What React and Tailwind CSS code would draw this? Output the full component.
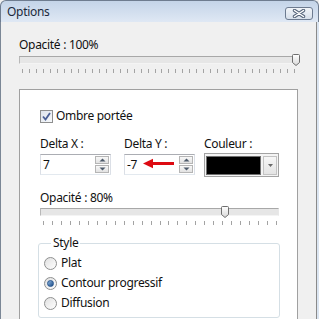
import React from "react";

function Thumb() {
  return (
    <svg width="8" height="12" viewBox="0 0 8 12" className="block">
      <defs>
        <linearGradient id="tg" x1="0" y1="0" x2="0" y2="1">
          <stop offset="0" stopColor="#ffffff" />
          <stop offset="1" stopColor="#d8d8d8" />
        </linearGradient>
      </defs>
      <path d="M1.5 0.5 H6.5 A1 1 0 0 1 7.5 1.5 V8.5 L4 11.5 L0.5 8.5 V1.5 A1 1 0 0 1 1.5 0.5 Z" fill="url(#tg)" stroke="#6f6f6f" strokeWidth="1" />
    </svg>
  );
}

function Slider({ width, ticks, thumb }) {
  const start = 3;
  const end = width - 3;
  const xs = [];
  for (let i = 0; i <= ticks; i++) xs.push(Math.round(start + ((end - start) * i) / ticks) + 0.5);
  return (
    <div className="relative h-[20px]" style={{ width }}>
      <div className="absolute left-0 right-0 top-[2px] h-[8px] border border-t-[#a8a8a8] border-l-[#b8b8b8] border-r-[#e8e8e8] border-b-[#f4f4f4] bg-[#e6e6e6]" />
      <div className="absolute top-0" style={{ left: thumb }}>
        <Thumb />
      </div>
      <svg className="absolute left-0 top-[15px]" width={width} height="5">
        {xs.map((x, i) => (
          <line key={i} x1={x} x2={x} y1="0" y2="4" stroke="#a3a3a3" strokeWidth="1" />
        ))}
      </svg>
    </div>
  );
}

function Spin() {
  return (
    <div className="flex flex-col gap-[1px] py-[1px]">
      <div className="w-[14px] h-[8px] border border-[#b5b5b5] bg-gradient-to-b from-[#f8f8f8] to-[#e2e2e2] flex items-center justify-center">
        <svg width="7" height="4"><path d="M0.5 3.5 L3.5 0.5 L6.5 3.5 Z" fill="#4d5a6b" /></svg>
      </div>
      <div className="w-[14px] h-[8px] border border-[#b5b5b5] bg-gradient-to-b from-[#f8f8f8] to-[#e2e2e2] flex items-center justify-center">
        <svg width="7" height="4"><path d="M0.5 0.5 L3.5 3.5 L6.5 0.5 Z" fill="#4d5a6b" /></svg>
      </div>
    </div>
  );
}

function NumInput({ value, children }) {
  return (
    <div className="relative w-[71px] h-[21px] border border-t-[#abadb3] border-l-[#dbdfe6] border-r-[#dbdfe6] border-b-[#e3e9ef] bg-white flex items-center justify-between pl-[2px] pr-[1px]">
      <span className="leading-[16px]">{value}</span>
      <Spin />
      {children}
    </div>
  );
}

function Radio({ checked, label }) {
  return (
    <div className="h-[20px] flex items-center">
      <div className="w-[13px] h-[13px] rounded-full border border-[#8e8f8f] bg-gradient-to-br from-[#e0e0e0] to-[#ffffff] flex items-center justify-center">
        {checked && <div className="w-[7px] h-[7px] rounded-full bg-gradient-to-br from-[#8fb7e0] to-[#1b4c86] border border-[#26558e]" />}
      </div>
      <span className="ml-[4px] leading-[16px]">{label}</span>
    </div>
  );
}

export default function App() {
  return (
    <div className="w-[319px] h-[319px] overflow-hidden flex flex-col bg-[#f0f0f0] text-[12px] tracking-[-0.3px] text-[#111] font-['Noto_Sans',sans-serif]">
      <div className="h-[22px] shrink-0 flex items-center justify-between rounded-t-[6px] border-t border-l border-r border-[#6e7c8f] bg-gradient-to-b from-[#c4d4e8] to-[#dfe8f4] pl-[6px] pr-[5px]">
        <span className="text-[#1c2a3c] leading-[16px]">Options</span>
        <div className="w-[28px] h-[13px] mt-[3px] rounded-[3px] border border-[#6d7b90] bg-gradient-to-b from-[#f2f5f9] to-[#d6dfea] flex items-center justify-center">
          <svg width="14" height="9" viewBox="0 0 14 9">
            <path d="M2.5 1.5 L11.5 7.5 M11.5 1.5 L2.5 7.5" stroke="#55647a" strokeWidth="3.4" strokeLinecap="round" />
            <path d="M2.5 1.5 L11.5 7.5 M11.5 1.5 L2.5 7.5" stroke="#ffffff" strokeWidth="1.5" strokeLinecap="round" />
          </svg>
        </div>
      </div>
      <div className="flex-1 flex min-h-0">
        <div className="w-[1px] bg-[#7b8796]" />
        <div className="flex-1 flex flex-col pl-[18px] pt-[15px] min-h-0">
          <div className="leading-[16px]">Opacité : 100%</div>
          <div className="mt-[1px]">
            <Slider width={278} ticks={39} thumb={273} />
          </div>
          <div className="mt-[15px] w-[279px] flex-1 bg-white border border-[#a0a0a0] border-b-0 pl-[20px] pt-[18px]">
            <div className="h-[16px] flex items-center">
              <div className="w-[13px] h-[13px] border border-[#8e8f8f] bg-gradient-to-br from-[#dde3ec] to-[#f7f9fb] flex items-center justify-center">
                <svg width="9" height="9" viewBox="0 0 9 9">
                  <path d="M1 4.5 L3.5 7.5 L8 1" fill="none" stroke="#4a5f96" strokeWidth="1.8" />
                </svg>
              </div>
              <span className="ml-[3px] leading-[16px]">Ombre portée</span>
            </div>
            <div className="mt-[12px] flex">
              <div className="w-[84px]">
                <div className="leading-[16px] h-[16px]">Delta X :</div>
                <div className="mt-[2px]">
                  <NumInput value="7" />
                </div>
              </div>
              <div className="w-[80px]">
                <div className="leading-[16px] h-[16px]">Delta Y :</div>
                <div className="mt-[2px]">
                  <NumInput value="-7">
                    <svg className="absolute left-[18px] top-[3px]" width="32" height="11" viewBox="0 0 32 11">
                      <path d="M0 5.5 L10 0.8 L10 10.2 Z" fill="#dd0a12" />
                      <rect x="9" y="4" width="22" height="3" fill="#dd0a12" />
                    </svg>
                  </NumInput>
                </div>
              </div>
              <div>
                <div className="leading-[16px] h-[16px]">Couleur :</div>
                <div className="mt-[1px] w-[75px] h-[24px] border border-[#a3a3a3] bg-[#f4f4f4] flex items-center p-[1px] gap-[2px]">
                  <div className="w-[55px] h-[19px] bg-black border border-[#707070]" />
                  <div className="w-[14px] h-[19px] border border-[#c3c3c3] bg-gradient-to-b from-[#f7f7f7] to-[#e4e4e4] flex items-center justify-center">
                    <svg width="5" height="3"><path d="M0 0 L5 0 L2.5 3 Z" fill="#6a6a6a" /></svg>
                  </div>
                </div>
              </div>
            </div>
            <div className="mt-[13px] leading-[16px]">Opacité : 80%</div>
            <Slider width={239} ticks={26} thumb={181} />
            <fieldset className="mt-[9px] -ml-[2px] w-[242px] border border-[#d5dfe5] rounded-[3px] pl-[5px] pb-[4px]">
              <legend className="ml-[7px] px-[2px] leading-[16px]">Style</legend>
              <div className="pt-[2px]">
                <Radio label="Plat" />
                <Radio checked label="Contour progressif" />
                <Radio label="Diffusion" />
              </div>
            </fieldset>
          </div>
        </div>
        <div className="w-[1px] bg-[#8a8a8a] ml-[18px]" />
        <div className="w-[2px] bg-[#dbe5f1]" />
      </div>
    </div>
  );
}
